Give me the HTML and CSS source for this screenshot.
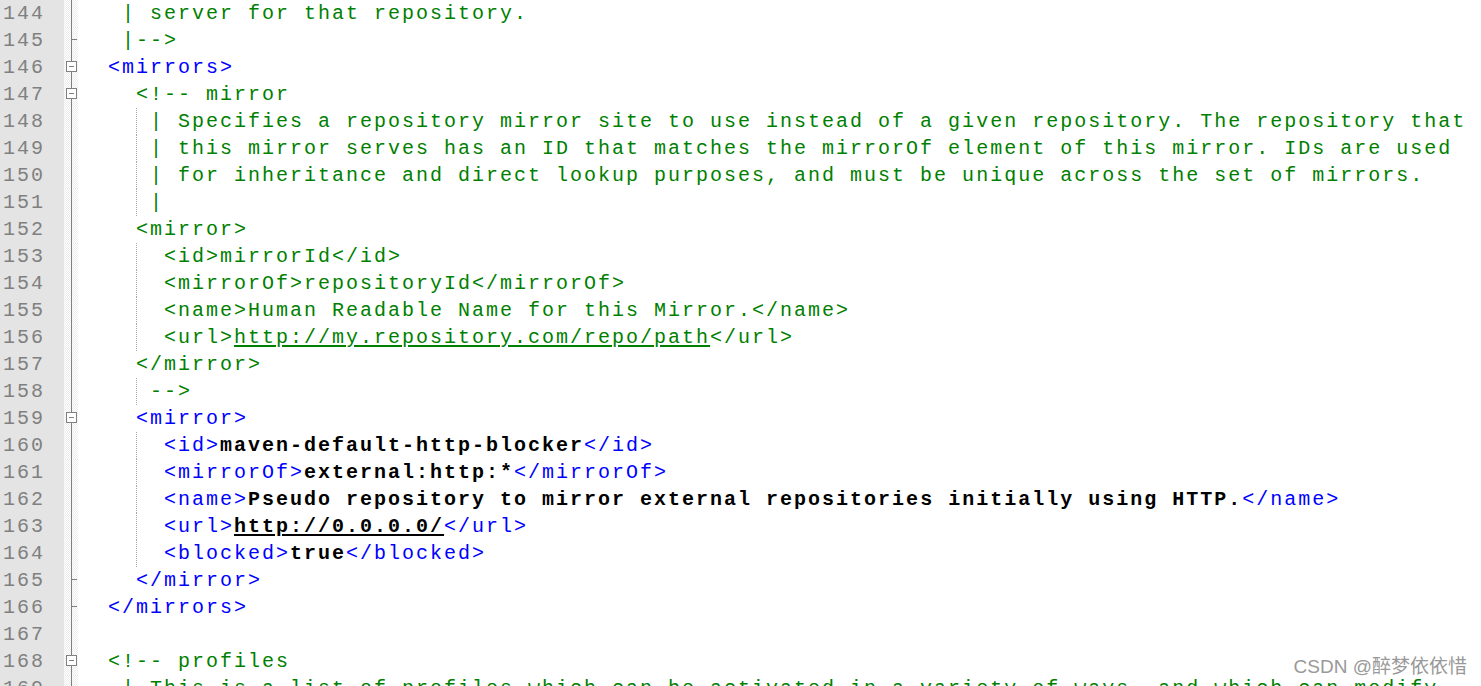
FILE: index.html
```html
<!DOCTYPE html>
<html lang="en">
<head>
  <meta charset="UTF-8">
  <meta name="viewport" content="width=device-width, initial-scale=1.0">
  <title>settings.xml</title>
  <link rel="stylesheet" href="styles.css">
</head>
<body>
  <div class="editor">
    <div class="line"><span class="num">144</span><span class="fold"></span><span class="code cm">   | server for that repository.</span></div>
    <div class="line"><span class="num">145</span><span class="fold"><i class="tick"></i></span><span class="code cm">   |--&gt;</span></div>
    <div class="line"><span class="num">146</span><span class="fold"><i class="box"></i></span><span class="code tag">  &lt;mirrors&gt;</span></div>
    <div class="line"><span class="num">147</span><span class="fold"><i class="box"></i></span><span class="code cm">    &lt;!-- mirror</span></div>
    <div class="line"><span class="num">148</span><span class="fold"></span><span class="code cm guide">     | Specifies a repository mirror site to use instead of a given repository. The repository that</span></div>
    <div class="line"><span class="num">149</span><span class="fold"></span><span class="code cm guide">     | this mirror serves has an ID that matches the mirrorOf element of this mirror. IDs are used</span></div>
    <div class="line"><span class="num">150</span><span class="fold"></span><span class="code cm guide">     | for inheritance and direct lookup purposes, and must be unique across the set of mirrors.</span></div>
    <div class="line"><span class="num">151</span><span class="fold"></span><span class="code cm guide">     |</span></div>
    <div class="line"><span class="num">152</span><span class="fold"></span><span class="code cm">    &lt;mirror&gt;</span></div>
    <div class="line"><span class="num">153</span><span class="fold"></span><span class="code cm guide">      &lt;id&gt;mirrorId&lt;/id&gt;</span></div>
    <div class="line"><span class="num">154</span><span class="fold"></span><span class="code cm guide">      &lt;mirrorOf&gt;repositoryId&lt;/mirrorOf&gt;</span></div>
    <div class="line"><span class="num">155</span><span class="fold"></span><span class="code cm guide">      &lt;name&gt;Human Readable Name for this Mirror.&lt;/name&gt;</span></div>
    <div class="line"><span class="num">156</span><span class="fold"></span><span class="code cm guide">      &lt;url&gt;<u>http://my.repository.com/repo/path</u>&lt;/url&gt;</span></div>
    <div class="line"><span class="num">157</span><span class="fold"></span><span class="code cm">    &lt;/mirror&gt;</span></div>
    <div class="line"><span class="num">158</span><span class="fold"></span><span class="code cm guide">     --&gt;</span></div>
    <div class="line"><span class="num">159</span><span class="fold"><i class="box"></i></span><span class="code tag">    &lt;mirror&gt;</span></div>
    <div class="line"><span class="num">160</span><span class="fold"></span><span class="code tag guide">      &lt;id&gt;<b>maven-default-http-blocker</b>&lt;/id&gt;</span></div>
    <div class="line"><span class="num">161</span><span class="fold"></span><span class="code tag guide">      &lt;mirrorOf&gt;<b>external:http:*</b>&lt;/mirrorOf&gt;</span></div>
    <div class="line"><span class="num">162</span><span class="fold"></span><span class="code tag guide">      &lt;name&gt;<b>Pseudo repository to mirror external repositories initially using HTTP.</b>&lt;/name&gt;</span></div>
    <div class="line"><span class="num">163</span><span class="fold"></span><span class="code tag guide">      &lt;url&gt;<b><u>http://0.0.0.0/</u></b>&lt;/url&gt;</span></div>
    <div class="line"><span class="num">164</span><span class="fold"></span><span class="code tag guide">      &lt;blocked&gt;<b>true</b>&lt;/blocked&gt;</span></div>
    <div class="line"><span class="num">165</span><span class="fold"><i class="tick"></i></span><span class="code tag">    &lt;/mirror&gt;</span></div>
    <div class="line"><span class="num">166</span><span class="fold"><i class="tick"></i></span><span class="code tag">  &lt;/mirrors&gt;</span></div>
    <div class="line"><span class="num">167</span><span class="fold"></span><span class="code"></span></div>
    <div class="line"><span class="num">168</span><span class="fold"><i class="box"></i></span><span class="code cm">  &lt;!-- profiles</span></div>
    <div class="line"><span class="num">169</span><span class="fold"></span><span class="code cm">   | This is a list of profiles which can be activated in a variety of ways, and which can modify</span></div>
  </div>

  <div class="mark">CSDN @醉梦依依惜</div>
</body>
</html>
```

FILE: styles.css
```css
html, body {
  margin: 0;
  height: 100%;
  overflow: hidden;
  background: #fff;
}

.editor {
  font-family: "Liberation Mono", monospace;
  font-size: 20px;
  letter-spacing: 2px;
  line-height: 27px;
}

.line {
  display: flex;
  height: 27px;
}

.num {
  width: 64px;
  flex: none;
  box-sizing: border-box;
  padding-right: 19px;
  text-align: right;
  color: #808080;
  background: #e4e4e4;
}

/* fold margin: checkered strip with the tree line */
.fold {
  position: relative;
  width: 14px;
  flex: none;
  background-color: #fff;
  background-image: conic-gradient(#ececec 25%, #fff 0 50%, #ececec 0 75%, #fff 0);
  background-size: 2px 2px;
}

.fold::before {
  content: "";
  position: absolute;
  left: 7px;
  top: 0;
  bottom: 0;
  width: 1px;
  background: #808080;
}

.box {
  position: absolute;
  left: 2px;
  top: 7px;
  width: 11px;
  height: 11px;
  box-sizing: border-box;
  border: 1px solid #808080;
  background: #fff;
}

.box::after {
  content: "";
  position: absolute;
  left: 2px;
  top: 4px;
  width: 5px;
  height: 1px;
  background: #808080;
}

.tick {
  position: absolute;
  left: 7px;
  top: 12px;
  width: 6px;
  height: 1px;
  background: #808080;
}

.code {
  flex: none;
  padding-left: 2px;
  white-space: pre;
}

.cm {
  color: #008000;
}

.tag {
  color: #0000ff;
}

.tag b {
  color: #000;
}

u {
  text-underline-offset: 2px;
}

.guide {
  background-image: repeating-linear-gradient(to bottom, #a8a8a8 0 1px, transparent 1px 2px);
  background-size: 1px 100%;
  background-position: 58px 0;
  background-repeat: no-repeat;
}

.mark {
  position: absolute;
  right: 14px;
  bottom: 8px;
  font-family: "Liberation Sans", "Noto Sans CJK SC", sans-serif;
  font-size: 19px;
  color: #999;
  letter-spacing: 0;
}
```
